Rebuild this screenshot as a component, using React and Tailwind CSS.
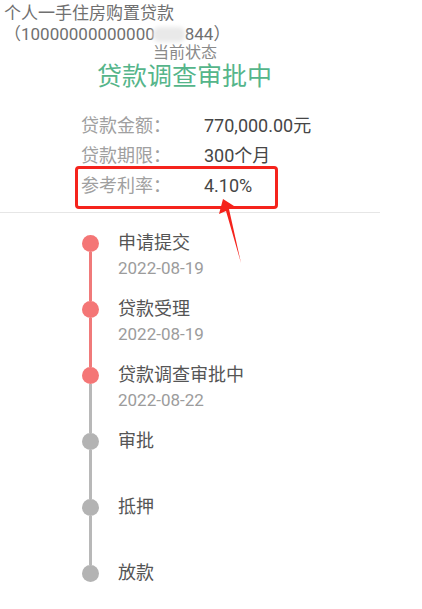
import React from 'react'

const steps = [
  { title: '申请提交', date: '2022-08-19', done: true },
  { title: '贷款受理', date: '2022-08-19', done: true },
  { title: '贷款调查审批中', date: '2022-08-22', done: true },
  { title: '审批', date: '', done: false },
  { title: '抵押', date: '', done: false },
  { title: '放款', date: '', done: false },
]

export default function App() {
  return (
    <div className="relative w-[422px] h-[609px] overflow-hidden bg-white" style={{ fontFamily: 'Roboto, "Noto Sans CJK SC", sans-serif' }}>
      <div className="pt-[3px] pl-[4px] text-[17px] leading-[21px] text-[#707070]">
        <div>个人一手住房购置贷款</div>
        <div className="flex items-center">
          <span>（10000000000000</span>
          <span className="inline-block w-[32px] h-[15px] -ml-[2px] rounded-[6px] bg-[#e9e9e9] blur-[2px]"></span>
          <span>844）</span>
        </div>
      </div>
      <div className="w-[370px] text-center text-[16px] leading-[16px] text-[#8a8a8a]">当前状态</div>
      <div className="w-[369px] text-center text-[25px] leading-[32px] text-[#55b58a]">贷款调查审批中</div>

      <div className="mt-[18px] pl-[81px] text-[18px] leading-[30px]">
        <div className="flex">
          <span className="w-[123px] text-[#a0a0a0]">贷款金额：</span>
          <span className="text-[#464646]">770,000.00元</span>
        </div>
        <div className="flex">
          <span className="w-[123px] text-[#a0a0a0]">贷款期限：</span>
          <span className="text-[#464646]">300个月</span>
        </div>
        <div className="relative flex">
          <span className="w-[123px] text-[#a0a0a0]">参考利率：</span>
          <span className="text-[#464646]">4.10%</span>
          <div className="absolute -left-[6px] -top-[5px] w-[203px] h-[43px] border-[3px] border-[#f5231c] rounded-[4px]"></div>
        </div>
      </div>

      <div className="mt-[11px] w-[380px] h-[1px] bg-[#e6e6e6]"></div>

      <div className="mt-[18px]">
        {steps.map((s, i) => {
          const topRed = i > 0 && i <= 2
          const botRed = i < 2
          return (
            <div key={i} className="flex h-[66px]">
              <div className="ml-[82px] w-[17px] flex flex-col items-center">
                <div className={`w-[3px] h-[4px] ${i === 0 ? 'bg-transparent' : topRed ? 'bg-[#f07a7a]' : 'bg-[#b8b8b8]'}`}></div>
                <div className={`w-[17px] h-[17px] rounded-full ${s.done ? 'bg-[#f47676]' : 'bg-[#b3b3b3]'}`}></div>
                <div className={`w-[3px] flex-1 ${i === steps.length - 1 ? 'bg-transparent' : botRed ? 'bg-[#f07a7a]' : 'bg-[#b8b8b8]'}`}></div>
              </div>
              <div className="ml-[19px]">
                <div className="text-[18px] leading-[24px] text-[#555]">{s.title}</div>
                {s.date && <div className="text-[17px] leading-[26px] text-[#9c9c9c]">{s.date}</div>}
              </div>
            </div>
          )
        })}
      </div>

      <svg className="absolute left-0 top-0 pointer-events-none" width="422" height="609">
        <polygon points="223,199 234,206 229,209 241,263 226,211 219,214" fill="#f5231c" />
      </svg>
    </div>
  )
}
